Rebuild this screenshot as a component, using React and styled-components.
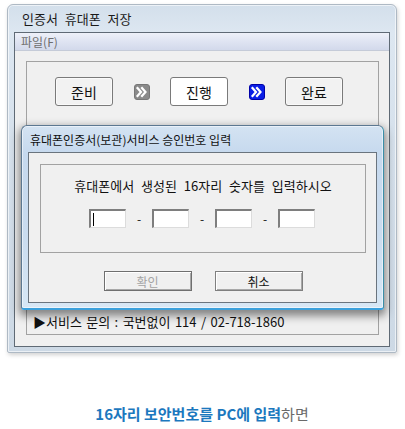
import styled, { createGlobalStyle } from "styled-components";

const GlobalStyle = createGlobalStyle`
  html, body {
    margin: 0;
    padding: 0;
    background: #ffffff;
  }
  body {
    font-family: "Noto Sans CJK KR", "Noto Sans", sans-serif;
  }
`;

const KR = `"Noto Sans CJK KR", "Noto Sans", sans-serif`;

const Page = styled.div`
  width: 405px;
  height: 429px;
  padding: 4px 0 0 7px;
  box-sizing: border-box;
  display: flex;
  flex-direction: column;
`;

const Window = styled.div`
  position: relative;
  width: 390px;
  height: 349px;
  box-sizing: border-box;
  border: 1px solid #aeb9c4;
  border-radius: 6px 6px 2px 2px;
  padding: 0 6px 5px 6px;
  background: linear-gradient(180deg, #d3dfeb 0%, #dde7f1 8%, #d6e1ec 40%, #cdd9e5 100%);
  box-shadow: 1px 2px 4px rgba(0, 0, 0, 0.18), inset 0 0 0 1px rgba(255, 255, 255, 0.6);
  display: flex;
  flex-direction: column;
`;

const TitleBar = styled.div`
  height: 27px;
  display: flex;
  align-items: center;
  padding-left: 8px;
  font-family: ${KR};
  font-size: 13px;
  word-spacing: 4px;
  color: #1a1a1a;
`;

const Client = styled.div`
  flex: 1;
  border: 1px solid #5f6a75;
  background: #f0f0f0;
  display: flex;
  flex-direction: column;
`;

const MenuBar = styled.div`
  height: 17px;
  display: flex;
  align-items: center;
  padding-left: 6px;
  background: linear-gradient(180deg, #eef1f9 0%, #dfe4f2 50%, #d2d9eb 100%);
  border-bottom: 1px solid #c5cbd8;
  font-family: ${KR};
  font-size: 12px;
  color: #6e6e6e;
`;

const Body = styled.div`
  flex: 1;
  display: flex;
  flex-direction: column;
  gap: 10px;
  padding: 10px 10px 11px 11px;
`;

const GroupBox = styled.div`
  border: 1px solid #a2a2a2;
  box-sizing: border-box;
  flex: ${(p) => (p.$grow ? 1 : "none")};
  height: ${(p) => (p.$height ? `${p.$height}px` : "auto")};
`;

const StepsRow = styled.div`
  display: flex;
  align-items: center;
  padding: 15px 0 0 28px;
`;

const StepButton = styled.div`
  width: 58px;
  height: 29px;
  box-sizing: border-box;
  border: 1px solid #7a7a7a;
  border-radius: 3px;
  background: ${(p) => (p.$active ? "#ffffff" : "#f2f2f2")};
  box-shadow: inset 0 0 0 1px ${(p) => (p.$active ? "#ffffff" : "#fafafa")};
  display: flex;
  align-items: center;
  justify-content: center;
  font-family: ${KR};
  font-size: 14px;
  color: #111;
`;

const ArrowCell = styled.div`
  width: 57px;
  display: flex;
  justify-content: center;
  align-items: center;
`;

const StatusText = styled.div`
  padding: 4px 0 0 6px;
  font-family: ${KR};
  font-size: 13px;
  word-spacing: 1.5px;
  color: #111;
  white-space: nowrap;
`;

const Dialog = styled.div`
  position: absolute;
  left: 13px;
  top: 120px;
  width: 363px;
  height: 185px;
  box-sizing: border-box;
  border: 1px solid #5c7891;
  border-bottom: 2px solid #3aa0dc;
  border-right-color: #3b8ea8;
  border-radius: 6px 6px 3px 3px;
  padding: 0 6px 5px 6px;
  background: linear-gradient(180deg, #d4e3f2 0%, #c6d9ee 15%, #cadcef 60%, #d7e7f5 100%);
  box-shadow: 0 4px 9px 2px rgba(0, 0, 0, 0.45), inset 0 0 0 1px rgba(255, 255, 255, 0.5);
  display: flex;
  flex-direction: column;
`;

const DialogTitle = styled.div`
  height: 26px;
  display: flex;
  align-items: center;
  padding-left: 2px;
  font-family: ${KR};
  font-size: 12px;
  color: #111;
`;

const DialogClient = styled.div`
  flex: 1;
  border: 1px solid #6a747e;
  background: #f0f0f0;
  padding: 11px 10px 0 11px;
  display: flex;
  flex-direction: column;
`;

const Message = styled.div`
  padding-top: 12px;
  line-height: 18px;
  text-align: center;
  font-family: ${KR};
  font-size: 13px;
  word-spacing: 4px;
  color: #111;
`;

const InputRow = styled.div`
  margin-top: 14px;
  display: flex;
  justify-content: center;
  align-items: center;
  padding-right: 2px;
`;

const CodeInput = styled.div`
  position: relative;
  width: 37px;
  height: 19px;
  box-sizing: border-box;
  background: #ffffff;
  border-top: 2px solid #7e7e7e;
  border-left: 2px solid #7e7e7e;
  border-right: 1px solid #dcdcdc;
  border-bottom: 1px solid #dcdcdc;

  &::after {
    content: "";
    display: ${(p) => (p.$focused ? "block" : "none")};
    position: absolute;
    left: 2px;
    top: 2px;
    width: 1px;
    height: 13px;
    background: #000;
  }
`;

const Dash = styled.div`
  width: 26px;
  text-align: center;
  font-family: ${KR};
  font-size: 12px;
  color: #111;
`;

const ButtonRow = styled.div`
  margin-top: 18px;
  display: flex;
  justify-content: center;
  gap: 23px;
`;

const ClassicButton = styled.div`
  width: 88px;
  height: 20px;
  box-sizing: border-box;
  border: 1px solid ${(p) => (p.$disabled ? "#6f6f6f" : "#7f7f7f")};
  background: #f0f0f0;
  box-shadow: inset 1px 1px 0 #ffffff, inset -1px -1px 0 #a8a8a8;
  display: flex;
  align-items: center;
  justify-content: center;
  font-family: ${KR};
  font-size: 12px;
  color: ${(p) => (p.$disabled ? "#a3a3a3" : "#111")};
`;

const Caption = styled.div`
  margin-top: 51px;
  width: 390px;
  text-align: center;
  line-height: 20px;
  font-family: ${KR};
  font-size: 15px;
`;

const Strong = styled.span`
  color: #1c78be;
  font-weight: 700;
`;

const Plain = styled.span`
  color: #6a6a6a;
`;

const NextArrow = ({ fill, edge }) => (
  <svg width="16" height="16" viewBox="0 0 16 16">
    <rect x="0.5" y="0.5" width="15" height="15" rx="2.5" fill={fill} stroke={edge} />
    <path
      d="M3.5 4 L7 8 L3.5 12 M8 4 L11.5 8 L8 12"
      fill="none"
      stroke="#ffffff"
      strokeWidth="2.2"
      strokeLinecap="square"
    />
  </svg>
);

const steps = ["준비", "진행", "완료"];

export default function App() {
  return (
    <>
      <GlobalStyle />
      <Page>
        <Window>
          <TitleBar>인증서 휴대폰 저장</TitleBar>
          <Client>
            <MenuBar>파일(F)</MenuBar>
            <Body>
              <GroupBox $grow>
                <StepsRow>
                  {steps.map((s, i) => (
                    <>
                      <StepButton key={s} $active={i === 1}>
                        {s}
                      </StepButton>
                      {i === 0 && (
                        <ArrowCell>
                          <NextArrow fill="#8a8a8a" edge="#777" />
                        </ArrowCell>
                      )}
                      {i === 1 && (
                        <ArrowCell>
                          <NextArrow fill="#0a1ee6" edge="#0000a8" />
                        </ArrowCell>
                      )}
                    </>
                  ))}
                </StepsRow>
              </GroupBox>
              <GroupBox $height={28}>
                <StatusText>▶서비스 문의 : 국번없이 114 / 02-718-1860</StatusText>
              </GroupBox>
            </Body>
          </Client>

          <Dialog>
            <DialogTitle>휴대폰인증서(보관)서비스 승인번호 입력</DialogTitle>
            <DialogClient>
              <GroupBox $height={89}>
                <Message>휴대폰에서 생성된 16자리 숫자를 입력하시오</Message>
                <InputRow>
                  <CodeInput $focused />
                  <Dash>-</Dash>
                  <CodeInput />
                  <Dash>-</Dash>
                  <CodeInput />
                  <Dash>-</Dash>
                  <CodeInput />
                </InputRow>
              </GroupBox>
              <ButtonRow>
                <ClassicButton $disabled>확인</ClassicButton>
                <ClassicButton>취소</ClassicButton>
              </ButtonRow>
            </DialogClient>
          </Dialog>
        </Window>

        <Caption>
          <Strong>16자리 보안번호를 PC에 입력</Strong>
          <Plain>하면</Plain>
        </Caption>
      </Page>
    </>
  );
}
